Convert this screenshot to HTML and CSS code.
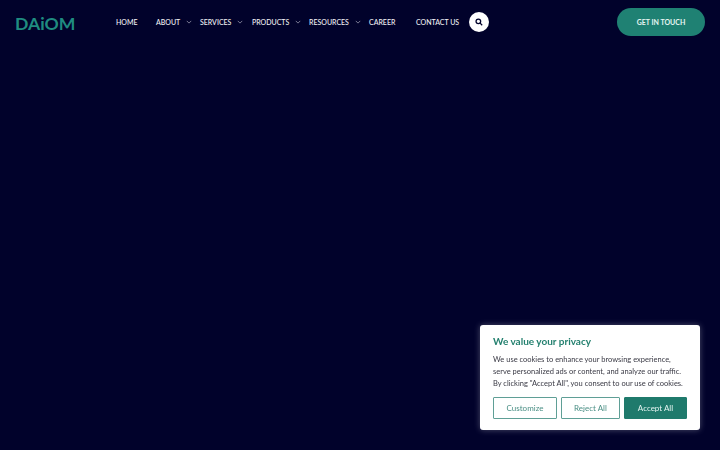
FILE: index.html
```html
<!DOCTYPE html>
<html lang="en">
<head>
    <meta charset="UTF-8">
    <meta name="viewport" content="width=device-width, initial-scale=1.0">
    <title>Daiom</title>
    <link rel="stylesheet" href="styles.css">
</head>
<body>
    <header class="header">
        <a class="logo" href="#">DAiOM</a>
        <nav class="nav">
            <a class="nav-link home" href="#">HOME</a>
            <a class="nav-link about" href="#">ABOUT<svg class="caret" viewBox="0 0 8 5"><path d="M1 1l3 3 3-3"/></svg></a>
            <a class="nav-link services" href="#">SERVICES<svg class="caret" viewBox="0 0 8 5"><path d="M1 1l3 3 3-3"/></svg></a>
            <a class="nav-link products" href="#">PRODUCTS<svg class="caret" viewBox="0 0 8 5"><path d="M1 1l3 3 3-3"/></svg></a>
            <a class="nav-link resources" href="#">RESOURCES<svg class="caret" viewBox="0 0 8 5"><path d="M1 1l3 3 3-3"/></svg></a>
            <a class="nav-link career" href="#">CAREER</a>
            <a class="nav-link contact" href="#">CONTACT US</a>
            <button class="search" type="button" aria-label="Search">
                <svg viewBox="0 0 10 10"><circle cx="4.2" cy="4.2" r="2.9"/><path d="M6.4 6.4l2.6 2.6"/></svg>
            </button>
        </nav>
        <a class="cta" href="#">GET IN TOUCH</a>
    </header>

    <div class="cookie">
        <h2 class="cookie-title">We value your privacy</h2>
        <p class="cookie-text">We use cookies to enhance your browsing experience, serve personalized ads or content, and analyze our traffic. By clicking "Accept All", you consent to our use of cookies.</p>
        <div class="cookie-btns">
            <button class="btn btn-custom" type="button">Customize</button>
            <button class="btn btn-reject" type="button">Reject All</button>
            <button class="btn btn-accept" type="button">Accept All</button>
        </div>
    </div>
</body>
</html>
```

FILE: styles.css
```css
html, body { margin: 0; height: 100%; }

body { background: #01022b; font-family: "Lato", "Noto Sans", sans-serif; overflow: hidden; }

a { text-decoration: none; }

.header { display: flex; align-items: center; height: 28px; padding: 8px 15px; }

.logo { width: 60px; margin-top: 3px; font-size: 17.6px; font-weight: 700; color: #1f8c80; white-space: nowrap; }

.nav { display: flex; align-items: center; margin-left: 41px; }

.nav-link { display: flex; align-items: center; font-size: 7px; font-weight: 500; color: #f2f2f5; white-space: nowrap; }

.caret { width: 6px; height: 4px; margin-left: 6px; fill: none; stroke: #c9c9d6; stroke-width: 0.8; }

.home { width: 40px; }
.about { width: 44px; }
.services { width: 52px; }
.products { width: 57px; }
.resources { width: 60px; }
.career { width: 47px; }
.contact { width: 53px; }

.search { display: flex; align-items: center; justify-content: center; width: 20px; height: 20px; padding: 0; border: 0; border-radius: 50%; background: #fff; }
.search svg { width: 8px; height: 8px; fill: none; stroke: #01022b; stroke-width: 1.6; }

.cta { display: flex; align-items: center; justify-content: center; width: 88px; height: 28px; margin-left: auto; border-radius: 14px; background: #1f8173; color: #e6f5f2; font-size: 7px; font-weight: 700; }

.cookie { position: fixed; right: 20px; bottom: 20px; box-sizing: border-box; width: 220px; height: 105px; padding: 10px 13px; background: #fff; border-radius: 3px; box-shadow: 0 0 6px rgba(255, 255, 255, 0.3); }

.cookie-title { margin: 0 0 6px; font-size: 10px; line-height: 13px; font-weight: 700; color: #24806f; }

.cookie-text { margin: 0 0 7px; font-size: 7.5px; line-height: 12px; color: #3a3a45; }

.cookie-btns { display: flex; gap: 4px; }

.btn { box-sizing: border-box; height: 22px; padding: 0; border: 1.5px solid #5f9f96; border-radius: 1px; background: #fff; color: #4a8f85; font-family: "Lato", sans-serif; font-size: 8px; }

.btn-custom { width: 64px; }
.btn-reject { width: 59px; }
.btn-accept { width: 63px; border-color: #1f7a6c; background: #1f7a6c; color: #e6f5f2; }
```
